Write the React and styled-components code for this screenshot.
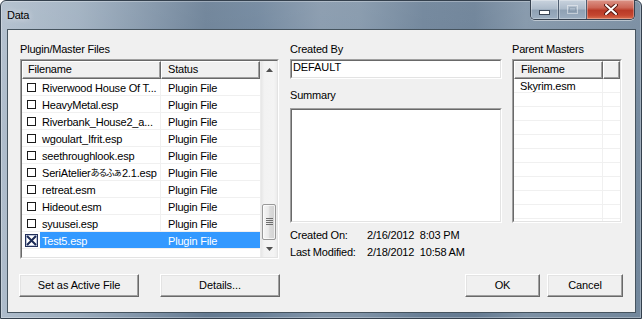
import React from 'react';
import styled, { createGlobalStyle } from 'styled-components';

const Global = createGlobalStyle`
  html, body { margin: 0; padding: 0; background: #ffffff; }
  body {
    width: 642px; height: 319px; overflow: hidden;
    font-family: "Liberation Sans", Arial, sans-serif;
    font-size: 11px; color: #000;
  }
  * { box-sizing: border-box; }
`;

const Window = styled.div`
  width: 642px;
  height: 319px;
  display: flex;
  flex-direction: column;
  padding: 0 5px 5px 6px;
  border: 1px solid #34404d;
  border-radius: 6px 6px 0 0;
  background:
    linear-gradient(180deg, rgba(255,255,255,0.10) 0%, rgba(255,255,255,0.02) 40%, rgba(255,255,255,0) 100%),
    linear-gradient(90deg, #aebccb 0%, #9cadbe 12%, #7b8fa4 24%, #657b92 32%, #6a8199 40%, #8295a9 50%, #7f93a7 56%, #687e95 66%, #657b92 74%, #7d91a5 82%, #72879c 100%);
  box-shadow: inset 0 0 0 1px rgba(255,255,255,0.3);
`;

const TitleBar = styled.div`
  height: 28px;
  display: flex;
  align-items: flex-start;
  justify-content: space-between;
`;

const TitleText = styled.span`
  margin-top: 8px;
  font-size: 11px;
  line-height: 13px;
  letter-spacing: -0.3px;
  color: #000;
  text-shadow: 0 0 6px rgba(255,255,255,0.8);
`;

const CaptionGroup = styled.div`
  display: flex;
  margin-top: -1px;
  margin-right: 1px;
  height: 20px;
  border: 1px solid #36414f;
  border-top: none;
  border-radius: 0 0 5px 5px;
  overflow: hidden;
  box-shadow: 0 1px 0 rgba(255,255,255,0.45);
`;

const CaptionButton = styled.div`
  width: ${p => p.$w}px;
  height: 100%;
  display: flex;
  align-items: center;
  justify-content: center;
  border-left: ${p => (p.$first ? 'none' : '1px solid #4f5e71')};
  box-shadow: inset 0 0 0 1px rgba(255,255,255,0.3);
  background: ${p =>
    p.$close
      ? 'linear-gradient(180deg, #dc9488 0%, #cc6656 40%, #b93a27 55%, #c44630 80%, #d8704f 100%)'
      : 'linear-gradient(180deg, #c9d3de 0%, #aebccb 45%, #8fa1b4 55%, #9dafc1 100%)'};
`;

const Client = styled.div`
  flex: 1;
  display: flex;
  flex-direction: column;
  background: #f0f0f0;
  border: 1px solid #46545f;
  padding: 13px 12px 0 12px;
`;

const TopSection = styled.div`
  display: flex;
  align-items: flex-start;
  height: 216px;
`;

const Column = styled.div`
  display: flex;
  flex-direction: column;
  width: ${p => p.$w}px;
  margin-left: ${p => p.$ml || 0}px;
`;

const Label = styled.div`
  height: 13px;
  line-height: 13px;
  letter-spacing: -0.2px;
  margin-top: ${p => p.$mt || 0}px;
  margin-bottom: ${p => (p.$mb === undefined ? 3 : p.$mb)}px;
  white-space: nowrap;
`;

const Sunken = styled.div`
  height: ${p => p.$h}px;
  border: 1px solid;
  border-color: #a0a0a0 #ffffff #ffffff #a0a0a0;
  display: flex;
`;

const SunkenInner = styled.div`
  flex: 1;
  display: flex;
  min-width: 0;
  border: 1px solid;
  border-color: #696969 #e3e3e3 #e3e3e3 #696969;
  background: #ffffff;
  overflow: hidden;
`;

const FieldText = styled.div`
  padding-left: 1px;
  line-height: 13px;
  letter-spacing: -0.1px;
`;

const ListArea = styled.div`
  flex: 1;
  display: flex;
  flex-direction: column;
  min-width: 0;
  overflow: hidden;
`;

const HeaderRow = styled.div`
  display: flex;
  height: 18px;
  flex-shrink: 0;
  background: #f0f0f0;
`;

const HeaderCell = styled.div`
  width: ${p => (p.$w ? `${p.$w}px` : 'auto')};
  flex: ${p => (p.$w ? '0 0 auto' : '1')};
  height: 18px;
  line-height: 15px;
  padding-left: ${p => p.$pl || 5}px;
  border: 1px solid;
  border-color: #ffffff #696969 #696969 #ffffff;
  box-shadow: inset -1px -1px 0 #a0a0a0;
  letter-spacing: -0.2px;
  white-space: nowrap;
`;

const Row = styled.div`
  display: flex;
  height: ${p => p.$h}px;
  flex-shrink: 0;
  border-bottom: 1px solid #f0f0f0;
`;

const NameCell = styled.div`
  width: ${p => p.$w}px;
  flex-shrink: 0;
  display: flex;
  align-items: center;
  padding-left: ${p => p.$pl}px;
  border-right: 1px solid ${p => (p.$sel ? '#3399ff' : '#f0f0f0')};
  white-space: nowrap;
  overflow: hidden;
`;

const Name = styled.span`
  flex: 1;
  align-self: stretch;
  display: flex;
  align-items: center;
  padding-left: 2px;
  padding-top: 1px;
  letter-spacing: -0.2px;
  background: ${p => (p.$sel ? '#3399ff' : 'transparent')};
  color: ${p => (p.$sel ? '#ffffff' : '#000000')};
`;

const Jp = styled.span`
  font-family: "Noto Sans CJK JP", "Liberation Sans", sans-serif;
  font-size: 9px;
  letter-spacing: -1.4px;
  margin-right: 1px;
`;

const StatusCell = styled.div`
  flex: 1;
  display: flex;
  align-items: center;
  padding-left: 7px;
  padding-top: 1px;
  letter-spacing: -0.2px;
  background: ${p => (p.$sel ? '#3399ff' : 'transparent')};
  color: ${p => (p.$sel ? '#ffffff' : '#000000')};
  white-space: nowrap;
`;

const PlainCell = styled.div`
  width: ${p => (p.$w ? `${p.$w}px` : 'auto')};
  flex: ${p => (p.$w ? '0 0 auto' : '1')};
  padding-left: 6px;
  padding-top: 1px;
  line-height: 12px;
  border-right: ${p => (p.$w ? '1px solid #f0f0f0' : 'none')};
  letter-spacing: -0.2px;
  white-space: nowrap;
`;

const ScrollBar = styled.div`
  width: 17px;
  flex-shrink: 0;
  display: flex;
  flex-direction: column;
  background: linear-gradient(90deg, #e6e6e6 0%, #f2f2f2 20%, #f4f4f4 80%, #ececec 100%);
  border-left: 1px solid #ececec;
`;

const ArrowButton = styled.div`
  height: 17px;
  flex-shrink: 0;
  display: flex;
  align-items: center;
  justify-content: center;
`;

const Track = styled.div`
  flex: 1;
  display: flex;
  flex-direction: column;
  justify-content: flex-end;
`;

const Thumb = styled.div`
  height: 36px;
  margin: 0 1px;
  border: 1px solid #999999;
  border-radius: 2px;
  background: linear-gradient(90deg, #f6f6f6 0%, #eaeaea 45%, #dcdcdc 55%, #d2d2d2 100%);
  box-shadow: inset 0 0 0 1px rgba(255,255,255,0.7);
  display: flex;
  align-items: center;
  justify-content: center;
`;

const InfoGrid = styled.div`
  display: grid;
  grid-template-columns: 77px auto;
  row-gap: 4px;
  margin-top: 6px;
  line-height: 13px;
  letter-spacing: -0.2px;
  white-space: pre;
`;

const ButtonRow = styled.div`
  display: flex;
  justify-content: space-between;
  margin-top: 15px;
  margin-left: -1px;
`;

const ButtonGroup = styled.div`
  display: flex;
  gap: ${p => p.$gap}px;
`;

const Button = styled.div`
  width: ${p => p.$w}px;
  height: 23px;
  display: flex;
  align-items: center;
  justify-content: center;
  background: #f0f0f0;
  border: 1px solid;
  border-color: #ffffff #696969 #696969 #ffffff;
  box-shadow: inset -1px -1px 0 #a0a0a0, inset 1px 1px 0 #e3e3e3;
  letter-spacing: -0.1px;
  padding-bottom: 1px;
`;

const UncheckedBox = () => (
  <svg width="9" height="9" viewBox="0 0 9 9" style={{ flexShrink: 0, marginRight: 4 }}>
    <rect x="0.5" y="0.5" width="8" height="8" fill="#fff" stroke="#1a1a1a" strokeWidth="1" />
  </svg>
);

const CheckedBox = () => (
  <svg width="13" height="13" viewBox="0 0 13 13" style={{ flexShrink: 0, marginLeft: -2, marginRight: 2 }}>
    <rect x="0.5" y="0.5" width="12" height="12" fill="#fff" stroke="#22305a" strokeWidth="1" />
    <rect x="1.5" y="1.5" width="10" height="10" fill="none" stroke="#7d8fb8" strokeWidth="1" strokeDasharray="1 1" />
    <path d="M2 2 L11 11 M11 2 L2 11" stroke="#1b2a55" strokeWidth="2" />
  </svg>
);

const UpArrow = () => (
  <svg width="7" height="4" viewBox="0 0 7 4"><polygon points="0,4 3.5,0 7,4" fill="#505050" /></svg>
);
const DownArrow = () => (
  <svg width="7" height="4" viewBox="0 0 7 4"><polygon points="0,0 7,0 3.5,4" fill="#505050" /></svg>
);
const Grip = () => (
  <svg width="7" height="8" viewBox="0 0 7 8">
    {[0, 2, 4, 6].map(y => (
      <rect key={y} x="0" y={y} width="7" height="1" fill="#6e6e6e" />
    ))}
  </svg>
);

const MinGlyph = () => (
  <svg width="11" height="5" viewBox="0 0 11 5" style={{ marginTop: 6 }}>
    <rect x="0.5" y="0.5" width="10" height="4" fill="#fff" stroke="#3a4656" />
  </svg>
);
const MaxGlyph = () => (
  <svg width="11" height="9" viewBox="0 0 11 9" style={{ opacity: 0.45 }}>
    <rect x="0.5" y="0.5" width="10" height="8" fill="none" stroke="#ffffff" />
    <rect x="2.5" y="2.5" width="6" height="4" fill="none" stroke="#7d8da0" />
  </svg>
);
const CloseGlyph = () => (
  <svg width="14" height="11" viewBox="0 0 14 11">
    <path d="M2 1 L12 10 M12 1 L2 10" stroke="#5a1a12" strokeWidth="4" strokeLinecap="round" />
    <path d="M2 1 L12 10 M12 1 L2 10" stroke="#ffffff" strokeWidth="2" strokeLinecap="round" />
  </svg>
);

const files = [
  { name: 'Riverwood House Of T...' },
  { name: 'HeavyMetal.esp' },
  { name: 'Riverbank_House2_a...' },
  { name: 'wgoulart_Ifrit.esp' },
  { name: 'seethroughlook.esp' },
  { parts: ['SeriAtelier', 'あるふぁ', '2.1.esp'] },
  { name: 'retreat.esm' },
  { name: 'Hideout.esm' },
  { name: 'syuusei.esp' },
  { name: 'Test5.esp', checked: true, selected: true },
];

const parentRows = ['Skyrim.esm', '', '', '', '', '', '', '', '', '', ''];

export default function App() {
  return (
    <>
      <Global />
      <Window>
        <TitleBar>
          <TitleText>Data</TitleText>
          <CaptionGroup>
            <CaptionButton $w={27} $first><MinGlyph /></CaptionButton>
            <CaptionButton $w={28}><MaxGlyph /></CaptionButton>
            <CaptionButton $w={48} $close><CloseGlyph /></CaptionButton>
          </CaptionGroup>
        </TitleBar>
        <Client>
          <TopSection>
            <Column $w={259}>
              <Label>Plugin/Master Files</Label>
              <Sunken $h={200}>
                <SunkenInner>
                  <ListArea>
                    <HeaderRow>
                      <HeaderCell $w={139}>Filename</HeaderCell>
                      <HeaderCell $pl={6}>Status</HeaderCell>
                    </HeaderRow>
                    {files.map((f, i) => (
                      <Row key={i} $h={17}>
                        <NameCell $w={139} $pl={5} $sel={f.selected}>
                          {f.checked ? <CheckedBox /> : <UncheckedBox />}
                          <Name $sel={f.selected}>
                            {f.parts ? (
                              <>
                                {f.parts[0]}
                                <Jp>{f.parts[1]}</Jp>
                                {f.parts[2]}
                              </>
                            ) : (
                              f.name
                            )}
                          </Name>
                        </NameCell>
                        <StatusCell $sel={f.selected}>Plugin File</StatusCell>
                      </Row>
                    ))}
                  </ListArea>
                  <ScrollBar>
                    <ArrowButton><UpArrow /></ArrowButton>
                    <Track>
                      <Thumb><Grip /></Thumb>
                    </Track>
                    <ArrowButton><DownArrow /></ArrowButton>
                  </ScrollBar>
                </SunkenInner>
              </Sunken>
            </Column>

            <Column $w={212} $ml={11}>
              <Label>Created By</Label>
              <Sunken $h={20}>
                <SunkenInner>
                  <FieldText>DEFAULT</FieldText>
                </SunkenInner>
              </Sunken>
              <Label $mt={10} $mb={6}>Summary</Label>
              <Sunken $h={115}>
                <SunkenInner />
              </Sunken>
              <InfoGrid>
                <span>Created On:</span>
                <span>2/16/2012  8:03 PM</span>
                <span>Last Modified:</span>
                <span>2/18/2012  10:58 AM</span>
              </InfoGrid>
            </Column>

            <Column $w={110} $ml={10}>
              <Label>Parent Masters</Label>
              <Sunken $h={164}>
                <SunkenInner>
                  <ListArea>
                    <HeaderRow>
                      <HeaderCell $w={89} $pl={6}>Filename</HeaderCell>
                      <HeaderCell />
                    </HeaderRow>
                    {parentRows.map((r, i) => (
                      <Row key={i} $h={14}>
                        <PlainCell $w={89}>{r}</PlainCell>
                        <PlainCell />
                      </Row>
                    ))}
                  </ListArea>
                </SunkenInner>
              </Sunken>
            </Column>
          </TopSection>

          <ButtonRow>
            <ButtonGroup $gap={21}>
              <Button $w={120}>Set as Active File</Button>
              <Button $w={120}>Details...</Button>
            </ButtonGroup>
            <ButtonGroup $gap={7}>
              <Button $w={75}>OK</Button>
              <Button $w={76}>Cancel</Button>
            </ButtonGroup>
          </ButtonRow>
        </Client>
      </Window>
    </>
  );
}
